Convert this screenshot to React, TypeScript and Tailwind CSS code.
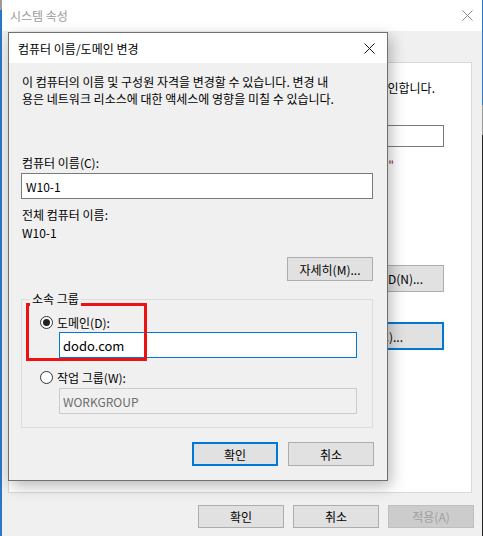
import React from "react";

const F = "font-['Noto_Sans_CJK_KR','Noto_Sans',sans-serif]";

function CloseX({ color }: { color: string }) {
  return (
    <svg width="11" height="11" viewBox="0 0 11 11">
      <path d="M0.5 0.5 L10.5 10.5 M10.5 0.5 L0.5 10.5" stroke={color} strokeWidth="1" fill="none" />
    </svg>
  );
}

function Radio({ checked }: { checked?: boolean }) {
  return (
    <span className="w-[13px] h-[13px] rounded-full border border-[#333333] bg-white flex items-center justify-center shrink-0">
      {checked && <span className="w-[7px] h-[7px] rounded-full bg-[#222222]" />}
    </span>
  );
}

export default function App() {
  return (
    <div className={`relative w-[483px] h-[536px] overflow-hidden flex bg-[#f0f0f0] text-black text-[12px] leading-[17px] ${F}`}>
      {/* desktop strip left */}
      <div className="w-[2px] h-full flex flex-col">
        <div className="h-[10px] bg-[#9a9a9a]" />
        <div className="flex-1 bg-[#2a78c4]" />
      </div>

      {/* back window: 시스템 속성 */}
      <div className="w-[480px] h-full flex flex-col bg-[#f0f0f0]">
        <div className="h-[31px] bg-white flex items-center justify-between pl-[8px] pr-[9px]">
          <span className="text-[#9b9b9b]">시스템 속성</span>
          <CloseX color="#8a8a8a" />
        </div>
        <div className="ml-[6px] mr-[10px] mt-[31px] h-[431px] bg-white border border-[#d9d9d9] flex flex-col items-end pr-[27px]">
          <div className="mt-[16px] mr-[9px] whitespace-nowrap">확인합니다.</div>
          <div className="mt-[29px] w-[300px] h-[22px] border border-[#7a7a7a] bg-white" />
          <div className="mt-[9px] mr-[50px] whitespace-nowrap text-[#7a1f2e]">컴퓨터"</div>
          <div className="mt-[92px] w-[130px] h-[27px] bg-[#e1e1e1] border border-[#adadad] flex items-center justify-end pr-[20px] whitespace-nowrap">
            ID(N)...
          </div>
          <div className="mt-[30px] w-[130px] h-[28px] bg-[#e1e1e1] border-2 border-[#0078d7] flex items-center justify-end pr-[39px] whitespace-nowrap">
            변경(C)...
          </div>
        </div>
        <div className="mt-[12px] flex justify-end gap-[9px] pr-[8px]">
          <div className="w-[86px] h-[23px] bg-[#e1e1e1] border border-[#adadad] flex items-center justify-center">확인</div>
          <div className="w-[86px] h-[23px] bg-[#e1e1e1] border border-[#adadad] flex items-center justify-center">취소</div>
          <div className="w-[86px] h-[23px] bg-[#cccccc] border border-[#bfbfbf] text-[#a0a0a0] flex items-center justify-center">적용(A)</div>
        </div>
      </div>

      {/* desktop strip right */}
      <div className="w-[1px] h-full flex flex-col">
        <div className="h-[105px] bg-[#2a78c4]" />
        <div className="h-[30px] bg-[#9a9a9a]" />
        <div className="flex-1 bg-[#222222]" />
      </div>

      {/* front dialog */}
      <div className="absolute left-[8px] top-[32px] w-[380px] h-[449px] border border-[#707070] bg-[#f0f0f0] flex flex-col shadow-[3px_5px_14px_rgba(0,0,0,0.28)]">
        <div className="h-[30px] bg-white flex items-center justify-between pl-[9px] pr-[12px] shrink-0">
          <span className="text-[12px]">컴퓨터 이름/도메인 변경</span>
          <CloseX color="#111111" />
        </div>
        <div className="flex flex-col pl-[12px] pr-[14px] pt-[10px]">
          <div className="pl-[1px]">
            이 컴퓨터의 이름 및 구성원 자격을 변경할 수 있습니다. 변경 내<br />
            용은 네트워크 리소스에 대한 액세스에 영향을 미칠 수 있습니다.
          </div>
          <div className="mt-[47px] pl-[1px]">컴퓨터 이름(C):</div>
          <div className="mt-[2px] h-[26px] bg-white border border-[#7a7a7a] flex items-center pl-[4px]">W10-1</div>
          <div className="mt-[7px] pl-[1px]">전체 컴퓨터 이름:</div>
          <div className="mt-[1px] pl-[1px]">W10-1</div>
          <div className="mt-[16px] self-end w-[86px] h-[24px] bg-[#e1e1e1] border border-[#adadad] flex items-center justify-center">
            자세히(M)...
          </div>

          <div className="relative mt-[18px] border border-[#dcdcdc] flex flex-col pl-[18px] pt-[14px] pb-[13px]">
            <span className="absolute z-10 left-[8px] top-[-10px] h-[18px] px-[2px] bg-[#f0f0f0] leading-[18px]">소속 그룹</span>
            <div className="flex items-center gap-[4px] h-[17px]">
              <Radio checked />
              <span>도메인(D):</span>
            </div>
            <div className="mt-[1px] ml-[19px] w-[298px] h-[26px] bg-white border border-[#0078d7] flex items-center pl-[3px] text-[13px]">
              dodo.com
            </div>
            <div className="mt-[11px] flex items-center gap-[4px] h-[17px]">
              <Radio />
              <span>작업 그룹(W):</span>
            </div>
            <div className="mt-[2px] ml-[19px] w-[298px] h-[26px] bg-[#f0f0f0] border border-[#cccccc] flex items-center pl-[3px] text-[#6d6d6d]">
              WORKGROUP
            </div>
          </div>

          <div className="mt-[14px] flex justify-end gap-[10px] -mr-[1px]">
            <div className="w-[86px] h-[24px] bg-[#e1e1e1] border-2 border-[#0078d7] flex items-center justify-center">확인</div>
            <div className="w-[86px] h-[24px] bg-[#e1e1e1] border border-[#adadad] flex items-center justify-center">취소</div>
          </div>
        </div>
      </div>

      {/* red annotation box */}
      <div className="absolute left-[26px] top-[303px] w-[121px] h-[58px] border-[3px] border-[#ee1111]" />
    </div>
  );
}
